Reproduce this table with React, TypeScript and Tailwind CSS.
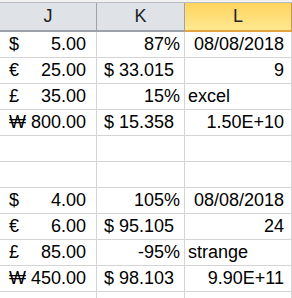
type Cell = { sym?: string; num?: string; text?: string; align?: 'left' | 'right' };

type Row = { j?: Cell; k?: Cell; l?: Cell };

const rows: Row[] = [
  { j: { sym: '$', num: '5.00' }, k: { text: '87%', align: 'right' }, l: { text: '08/08/2018', align: 'right' } },
  { j: { sym: '€', num: '25.00' }, k: { sym: '$', num: '33.015' }, l: { text: '9', align: 'right' } },
  { j: { sym: '£', num: '35.00' }, k: { text: '15%', align: 'right' }, l: { text: 'excel', align: 'left' } },
  { j: { sym: '₩', num: '800.00' }, k: { sym: '$', num: '15.358' }, l: { text: '1.50E+10', align: 'right' } },
  {},
  {},
  { j: { sym: '$', num: '4.00' }, k: { text: '105%', align: 'right' }, l: { text: '08/08/2018', align: 'right' } },
  { j: { sym: '€', num: '6.00' }, k: { sym: '$', num: '95.105' }, l: { text: '24', align: 'right' } },
  { j: { sym: '£', num: '85.00' }, k: { text: '-95%', align: 'right' }, l: { text: 'strange', align: 'left' } },
  { j: { sym: '₩', num: '450.00' }, k: { sym: '$', num: '98.103' }, l: { text: '9.90E+11', align: 'right' } },
  {},
];

// accounting cells: symbol pinned left, amount pinned right
function CellBody({ cell, padLeft, padRight }: { cell?: Cell; padLeft: string; padRight: string }) {
  if (!cell) return null;
  if (cell.sym) {
    return (
      <div className={`flex w-full justify-between ${padLeft} pr-[10px]`}>
        <span>{cell.sym}</span>
        <span>{cell.num}</span>
      </div>
    );
  }
  if (cell.align === 'left') {
    return <div className="w-full pl-[3px] text-left">{cell.text}</div>;
  }
  return <div className={`w-full text-right ${padRight}`}>{cell.text}</div>;
}

export default function App() {
  return (
    <div
      className="w-[292px] h-[298px] overflow-hidden bg-white text-[18px] text-black"
      style={{ fontFamily: '"Liberation Sans", Arial, sans-serif' }}
    >
      <div className="h-[2px] bg-[#f2f2f2]" />
      <div className="flex h-[30px] border-t border-[#b9bec4]">
        <div className="flex w-[97px] items-center justify-center border-r border-b-2 border-[#9da3aa] bg-[#dfe3e8] text-[#222]">
          J
        </div>
        <div className="flex w-[88px] items-center justify-center border-r border-b-2 border-[#9da3aa] bg-[#dfe3e8] text-[#222]">
          K
        </div>
        <div className="flex w-[107px] items-center justify-center border-r border-b-2 border-r-[#c99a4a] border-b-[#e3a33f] bg-gradient-to-b from-[#ffd45c] to-[#ffe891] text-[#222]">
          L
        </div>
      </div>
      {rows.map((r, i) => (
        <div key={i} className="flex h-[26px] leading-[25px]">
          <div className="flex w-[97px] items-center border-r border-b border-[#d4d4d4]">
            <CellBody cell={r.j} padLeft="pl-[9px]" padRight="pr-[10px]" />
          </div>
          <div className="flex w-[88px] items-center border-r border-b border-[#d4d4d4]">
            <CellBody cell={r.k} padLeft="pl-[7px]" padRight="pr-[4px]" />
          </div>
          <div className="flex w-[107px] items-center border-r border-b border-[#d4d4d4]">
            <CellBody cell={r.l} padLeft="pl-[3px]" padRight="pr-[7px]" />
          </div>
        </div>
      ))}
    </div>
  );
}
